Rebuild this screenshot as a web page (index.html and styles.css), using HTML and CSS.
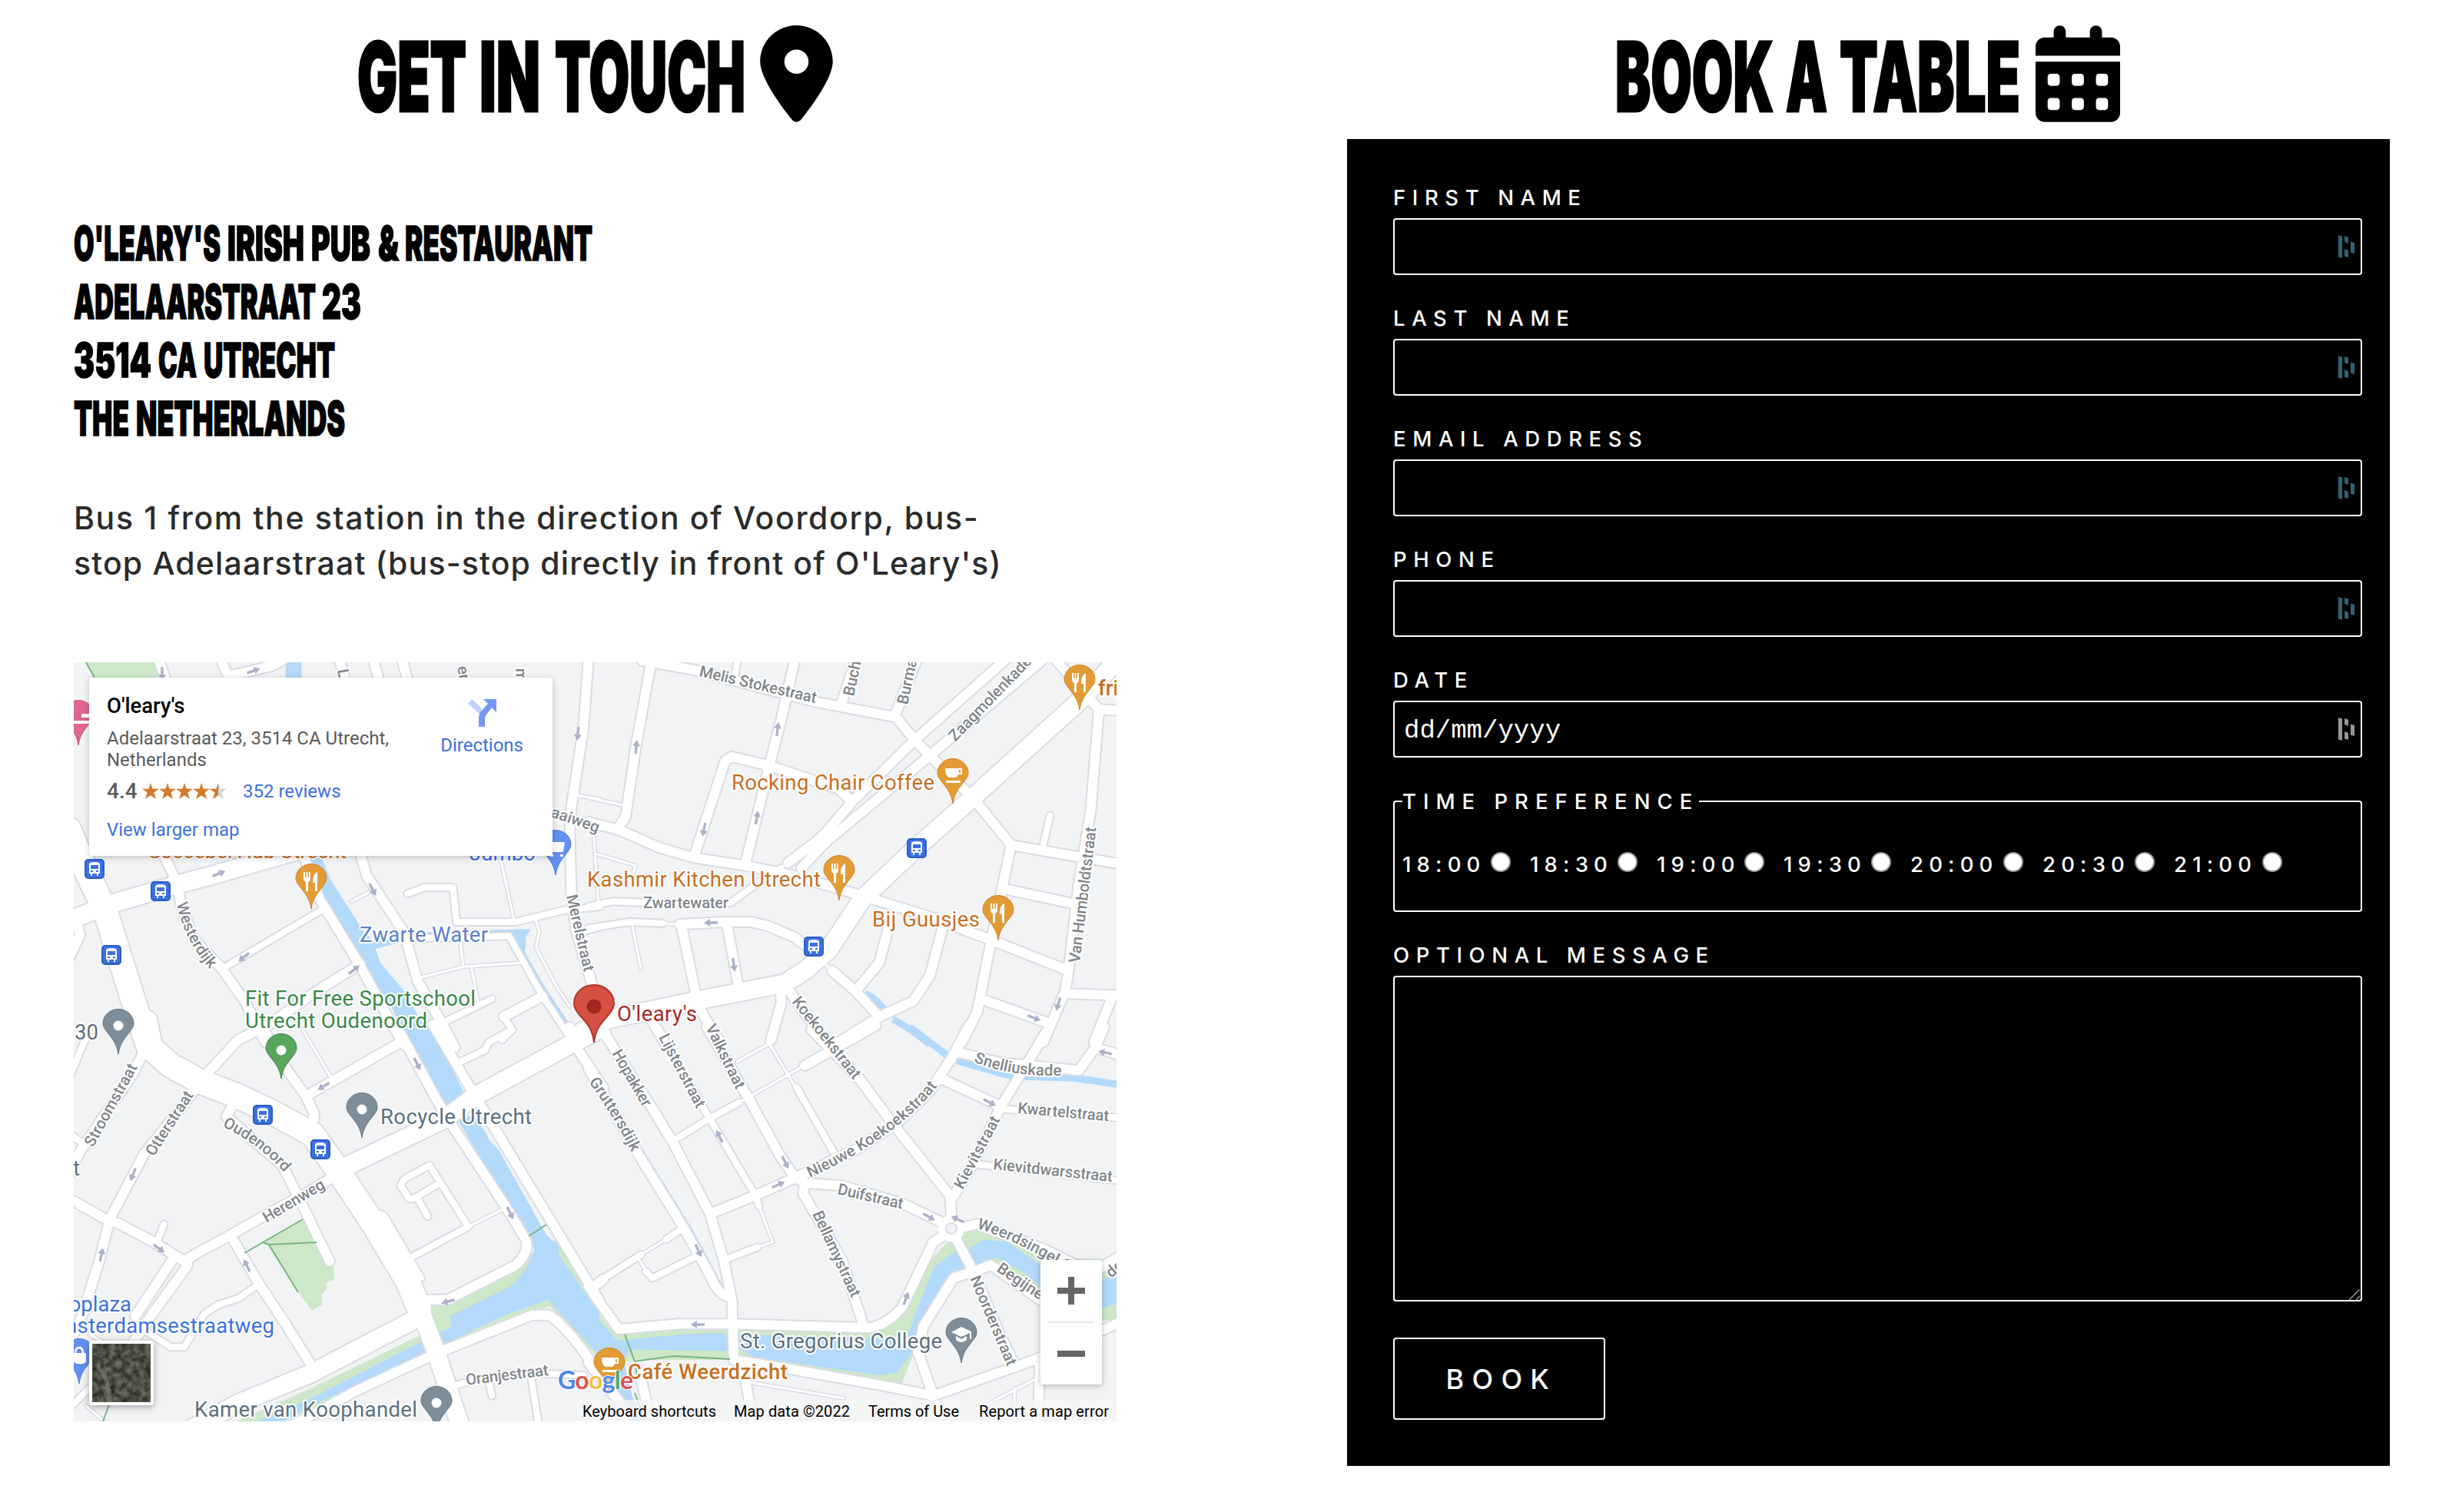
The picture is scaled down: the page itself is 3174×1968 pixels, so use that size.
FILE: index.html
```html
<!DOCTYPE html>
<html lang="en">
<head>
<meta charset="utf-8">
<title>O'Leary's - Contact</title>
<link rel="stylesheet" href="styles.css">
</head>
<body>
<svg width="0" height="0" class="sprite" aria-hidden="true">
  <defs>
    <symbol id="dash" viewBox="0 0 21 30"><path d="M0 0l5 1.5V30L0 28.500zM8 1l5 1.500V11L8 9zM8 18l5 2v9l-5-1.500zM16 8.500l5 1.500v14l-5-1.500z"/></symbol>
    <path id="star" d="M11 0l2.600 7.700H22l-6.600 4.900 2.500 8.400L11 16.200 4.100 21l2.500-8.400L0 7.700h8.400z"/>
  </defs>
</svg>
<main class="page">
  <section class="column">
    <h1 class="title">
      <svg class="title-text" width="502" height="181">
        <text x="-1" y="145" textLength="142" lengthAdjust="spacingAndGlyphs">GET</text>
        <text x="158" y="145" textLength="79" lengthAdjust="spacingAndGlyphs">IN</text>
        <text x="256" y="145" textLength="248" lengthAdjust="spacingAndGlyphs">TOUCH</text>
      </svg>
      <svg class="title-icon" width="95" height="126" viewBox="0 0 384 512"><path d="M215.7 499.2C267 435 384 279.4 384 192C384 86 298 0 192 0S0 86 0 192c0 87.4 117 243 168.3 307.2c12.3 15.3 35.1 15.3 47.4 0zM192 256c-35.3 0-64-28.700-64-64s28.700-64 64-64s64 28.700 64 64s-28.700 64-64 64z"/></svg>
    </h1>
    <svg class="address" width="700" height="310">
      <text x="0" y="62" textLength="191" lengthAdjust="spacingAndGlyphs">O'LEARY'S</text><text x="200" y="62" textLength="100" lengthAdjust="spacingAndGlyphs">IRISH</text><text x="309" y="62" textLength="77" lengthAdjust="spacingAndGlyphs">PUB</text><text x="396" y="62" textLength="27" lengthAdjust="spacingAndGlyphs">&amp;</text><text x="431" y="62" textLength="244" lengthAdjust="spacingAndGlyphs">RESTAURANT</text>
      <text x="0" y="138" textLength="315" lengthAdjust="spacingAndGlyphs">ADELAARSTRAAT</text><text x="323" y="138" textLength="51" lengthAdjust="spacingAndGlyphs">23</text>
      <text x="0" y="214" textLength="101" lengthAdjust="spacingAndGlyphs">3514</text><text x="110" y="214" textLength="50" lengthAdjust="spacingAndGlyphs">CA</text><text x="169" y="214" textLength="171" lengthAdjust="spacingAndGlyphs">UTRECHT</text>
      <text x="0" y="290" textLength="72" lengthAdjust="spacingAndGlyphs">THE</text><text x="81" y="290" textLength="272" lengthAdjust="spacingAndGlyphs">NETHERLANDS</text>
    </svg>
    <p class="route"><span class="route-a">Bus 1 from the station in the direction of Voordorp, bus-</span><br><span class="route-b">stop Adelaarstraat (bus-stop directly in front of O'Leary's)</span></p>

    <div class="map">
      <svg class="map-canvas" width="1357" height="988" viewBox="96 862 1357 988">
        <defs>
          <g id="wide">
            <g transform="translate(90 850) scale(.44014 .33333)"><path d="M0 690L50 850 105 1000 200 1400 235 1540"/></g>
            <g transform="translate(90 1340) scale(.44014 .33333)"><path d="M225-30L240 70 300 140 390 205 500 260 610 330 720 410 790 540 900 760 1000 980 1035 1090"/></g>
          </g>
          <g id="major">
            <g transform="translate(90 850) scale(.44014 .33333)"><path d="M0 1045L110 985 330 900 430 865 600 800 680 770"/></g>
            <g transform="translate(770 850) scale(.44014 .33333)"><path d="M1560 20L1440 190 1130 560 960 760 800 960 700 1160 630 1240 570 1290 300 1360 50 1430-30 1480"/></g>
            <g transform="translate(90 1340) scale(.44014 .33333)"><path d="M1568 0L1480 60 1200 260 1110 350 810 540M1040 1120L850 1250 720 1340 500 1460 360 1560M1040 1100L1085 1260 1160 1560"/></g>
          </g>
          <g id="street">
            <g transform="translate(90 850) scale(.44014 .33333)"><path d="M0 1190L32 1100 20 1040M265 30L285 100M450 30L470 90 600 50 630 30M900 30L915 100M985 30L1000 100M800 30L815 100M1535 30L1520 300 1485 600 1480 700 1485 950 1500 1090 1545 1290 1568 1400M280 790L320 900 330 980 370 1120 450 1230 520 1360 580 1520M690 780L740 960 860 1220 950 1440 990 1530M860 780L880 870 990 1090 1030 1280 1100 1440 1140 1540M570 1470L720 1330 860 1215M1400 1340L1285 1420"/></g>
            <g transform="translate(770 850) scale(.44014 .33333)"><path d="M150 30L300 65 660 190 900 250 955 340 1000 400 1130 570 1240 750 1568 825M175 40L130 370 100 640 75 690M600 30L560 260 525 440 455 820M525 440L415 405 395 420 305 785M525 440L730 530 770 580M-10 660L80 690 200 760 305 800 455 830 600 870 780 940 1000 1030 1180 1120 1410 1240 1400 1320 1335 1520M1220 30L955 340 770 580 680 720 580 820M1330 30L1000 400 690 740 620 840M680 715L692 742M780 30L740 190M960 30L895 250M1375 30L1440 130 1500 220 1568 225M1500 220L1475 620 1440 900 1410 1240M1240 750L1180 1130 1140 1400 1095 1520M1215 920L1430 980M1150 1350L1340 1440M1400 1330L1568 1337M1540 1340L1485 1520M260 1060L390 1050 470 1050 520 1065 600 1110 650 1160M265 1060L312 1360M400 1060L435 1310M880 1060L850 1210 780 1320M1040 1060L1000 1260 950 1360 850 1420 730 1520M710 1240L780 1320 850 1420M560 1300L560 1370 530 1510M570 1290L600 1350 700 1530M310 1370L380 1520M180 1440L215 1520M20 1440L60 1530"/></g>
            <g transform="translate(90 1340) scale(.44014 .33333)"><path d="M230 60L190 170 30 480 0 570M575-10L500 40 395 190 340 290 220 490 120 740 90 900 40 1110 10 1200M0 660L100 735 150 760 250 830 340 905 370 880 480 800 560 740 700 640 800 560M350 920L230 1140 180 1240M305 900L195 1120M480 810L560 990 640 1150 725 1330M490 280L465 340 560 450 630 530 680 660 770 905M575 0L640 150 700 260 725 330 720 370M700 260L980 50M965-20L1110 330 1290 690 1350 820Q1362 870 1320 920L1120 1055 1050 1055M1075-20L1200 260 1568 1060M1480-10L1500 70 1580 230M1600 1400L1500 1220Q1430 1110 1410 1115L1370 1115 1085 1265 850 1410 640 1560M1545 1010L1580 975"/></g>
            <g transform="translate(770 1340) scale(.44014 .33333)"><path d="M30 0L180 310 240 440 350 720 390 900 415 1060 420 1290M420 1290L560 1320 860 1390 1010 1430 1310 1290 1568 1140M-10 150L130 470 270 770 350 960Q375 1040 410 1045M340-10L460 260 560 500 600 575M630 140L840-15M650 0L790 190 880 350 1060 650 1065 760M350 720L480 650 600 580 780 470 900 370 1000 240 1065 110 1115-15M600 580L640 600 740 610 920 680 1030 750M630 600L625 640 740 900 780 1060 805 1160M-10 1000L20 1060 80 1170 260 1150 420 1150 820 1165Q880 1150 920 1080L1010 830 1060 790M1085 90L1210 130 1440 160 1490 70 1560 100M1490 70L1515-10M1355-15L1210 300 1130 520 1065 660M1030 190L1210 300M1070 780L1140 760 1340 860 1480 950 1568 880M1075 810L1130 950 1200 1170 1250 1310M1010 1430L965 1260 980 1160 1070 970 1130 945 1180 920 1330 1060M1325 1290L1320 1560M-10 1300L80 1450 100 1560M140 1330L170 1500M455 1370L480 1560"/></g>
          </g>
          <g id="small">
            <g transform="translate(90 850) scale(.44014 .33333)"><path d="M1000 940L1050 915 1135 915 1145 1050 1320 1050 1460 1005 1568 990M1000 1115L1300 1105 1400 1340 1490 1520M1095 1450L1250 1350M1510 1090L1568 1070M450 1235L750 1000M1285 1420L1310 1470 1280 1510"/></g>
            <g transform="translate(770 850) scale(.44014 .33333)"><path d="M430 30L425 80M1355 635L1335 750M-10 990L60 970 160 975 410 975 500 890 560 840M-10 1075L110 1050 210 1055"/></g>
            <g transform="translate(90 1340) scale(.44014 .33333)"><path d="M50 30L0 190M0 405L45 450M280 760L260 830M230 1180L300 1240 340 1240 400 1110 440 1075 500 1050 555 1000M1150 130L1230 80 1240 50 1310 0M1095 600L1025 655Q1005 670 1000 650L980 610 990 585 1065 530 1180 770 1010 890M1030 660L1060 730M905 715L930 725 1040 970M1140 1390L1220 1360 1340 1340 1520 1350M1240 1370L1250 1430M1365 1350L1390 1560M0 1480L60 1400"/></g>
            <g transform="translate(770 1340) scale(.44014 .33333)"><path d="M200 0L345 340 485 650 495 690M490 850L390 900M240 435L345 350 435 285M525 50L540 0M605 225L720 490M-10 1010L145 880M220 820L265 780M160 945L180 970 310 885M1210 310L1560 345M1130 525L1560 590"/></g>
          </g>
          <g id="lane">
            <g transform="translate(90 850) scale(.44014 .33333)"><path d="M835 970L885 935M1275 800L1315 1040M1155 1110L1165 1225M1190 1230L1210 1370M1030 1270L1165 1225 1335 1210M1380 1045L1390 1090 1380 1150 1440 1300 1480 1380M1495 555L1568 570"/></g>
            <g transform="translate(770 850) scale(.44014 .33333)"><path d="M545 850L580 820M210 1055L260 1060M680 1200L710 1240M120 1065L145 1230M-10 565L95 595M5 700L20 970M15 785L130 830 120 870"/></g>
            <g transform="translate(90 1340) scale(.44014 .33333)"><path d="M690 0L775 190M1180 770L1285 700M50 1470L130 1560M60 1190L100 1220"/></g>
            <g transform="translate(770 1340) scale(.44014 .33333)"><path d="M495 690L535 830 490 850M435 285L630 140M430 125L525 55 600 220M145 880L225 815M135 890L160 940M455 1375L745 1440M1100 1510L1320 1360M1250 1400V1560"/></g>
          </g>
          <path id="drop" d="M0 0C-2-14-8-20-14-28C-18-33-20-36-20-40A20 18.500 0 0 1 20-40C20-36 18-33 14-28C8-20 2-14 0 0z"/>
          <g id="food"><use href="#drop"/><path class="glyph" d="M-10-48h2v7h1.500v-7h2v7H-3v-7h2v8q0 4-3 5v12h-3v-12q-3-1-3-5zM8-48v25H5v-11H2q0-12 6-14z"/></g>
          <g id="coffee"><use href="#drop"/><path class="glyph" d="M-10-46h22v8h-5q-1 4-4 4h-8q-5-2-5-12zM8-44v4h2v-4zM-9-30H10v3H-9z"/></g>
          <g id="spot"><use href="#drop"/><circle class="glyph" cy="-37" r="6.500"/></g>
          <g id="bus"><rect x="-12" y="-12" width="24" height="24" rx="4" fill="#3b71e0" stroke="#2c5cc0" stroke-width="2"/><path fill="#fff" fill-rule="evenodd" d="M-7-6q0-3 7-3t7 3V6H5v3H3V6h-6v3h-2V6h-2zM-5-5v5H5v-5zM-5 2v2h3V2zM2 2v2h3V2z"/></g>
          <path id="arrow" d="M0-9L5-1H1.700V9H-1.700V-1H-5z"/>
          <path id="p-west" d="M230 1176Q239 1222 272 1260"/>
          <path id="p-gru" d="M766 1408Q800 1455 822 1500"/>
          <path id="p-oud" d="M289 1466Q335 1488 366 1522"/>
          <path id="p-nwe" d="M1054 1533Q1165 1482 1218 1416"/>
          <path id="p-snel" d="M1267 1382Q1315 1402 1382 1400"/>
          <path id="p-weer" d="M1271 1599Q1320 1612 1400 1662"/>
          <filter id="grain" x="0" y="0" width="1" height="1" color-interpolation-filters="sRGB"><feTurbulence type="fractalNoise" baseFrequency=".13" numOctaves="4" seed="4"/><feColorMatrix values=".45 0 0 0 .07  .45 0 0 0 .08  .42 0 0 0 .055  0 0 0 0 1"/></filter>
        </defs>
        <rect x="96" y="862" width="1357" height="988" fill="#f1f3f5"/>
        <g class="green">
          <path transform="translate(90 850) scale(.44014 .33333)" d="M50 30H262V100H75Z"/>
          <path transform="translate(90 1340) scale(.44014 .33333)" d="M690 740L735 840 780 920 785 975 760 990 762 1010 745 1035 748 1075 718 1098 680 1030 585 840 570 830ZM1065 1085L1365 880 1440 820 1568 1070V1290L1420 1080 1085 1265 700 1490 600 1550 460 1550 700 1410 1060 1180Z"/>
          <path transform="translate(770 1340) scale(.44014 .33333)" d="M-10 1060L70 1190 270 1170 420 1175 830 1170 910 1130 1000 900 1060 820 1110 790 1150 780 1250 800 1340 890 1568 900V1130L1400 1150 1290 1000 1190 920 1060 990 970 1200 950 1270 915 1390 850 1380 470 1290 130 1290 90 1300Z"/>
        </g>
        <g class="water">
          <path transform="translate(90 850) scale(.44014 .33333)" d="M640 30H687V100H640ZM695 780H740L775 890 870 1085 900 1125 1000 1115 1010 1092 1365 1077 1350 1110 1348 1170 1400 1290 1490 1470H1475L1380 1290 1320 1120 1300 1098 1010 1120 905 1155 920 1210 985 1310 1070 1500 1080 1540H1000L960 1400 830 1130 740 930Z"/>
          <path transform="translate(90 1340) scale(.44014 .33333)" d="M980-10H1070L1175 265 1120 305ZM1150 355L1195 330 1235 410 1240 430 1270 470 1410 800 1450 850 1445 875 1568 1110V1275L1415 1055 1300 1110 1085 1240 700 1480 600 1560 520 1550 700 1450 1070 1200 1130 1160 1125 1120 1310 1000 1350 940 1375 860 1355 800 1290 670Z"/>
          <path transform="translate(770 1340) scale(.44014 .33333)" d="M-10 1090L75 1215 270 1190 385 1185 405 1200 400 1255 110 1250 95 1300 120 1430 160 1550H100L60 1330-10 1210ZM430 1190L930 1210 960 1100 1010 930 1070 870 1110 860 1160 820 1230 830 1330 920 1400 1000 1568 960V1060L1510 1090 1400 1100 1290 960 1200 890 1130 920 1060 960 1010 1070 960 1200 950 1260 900 1340 850 1350 480 1280 430 1240Z"/>
        </g>
        <g class="stream">
          <path transform="translate(770 850) scale(.44014 .33333)" d="M808 1330Q835 1340 870 1400M890 1430Q950 1470 1000 1530"/>
          <path transform="translate(770 1340) scale(.44014 .33333)" d="M940-10Q1010 60 1060 110M1080 122L1240 182 1430 190 1560 215"/>
          <path class="brook" transform="translate(770 1340) scale(.44014 .33333)" d="M-30 70L-5 130 130 440 290 780 380 1000"/>
        </g>
        <use href="#lane" class="lane-edge"/><use href="#small" class="small-edge"/><use href="#street" class="street-edge"/><use href="#major" class="major-edge"/><use href="#wide" class="wide-edge"/>
        <use href="#lane" class="lane-fill"/><use href="#small" class="small-fill"/><use href="#street" class="street-fill"/><use href="#major" class="major-fill"/><use href="#wide" class="wide-fill"/>
        <circle cx="1238" cy="1599" r="12" fill="#f1f3f5" stroke="#fff" stroke-width="10"/><circle cx="1238" cy="1599" r="7" fill="none" stroke="#dadce3" stroke-width="2"/>
        <path class="trail" d="M112 862L123 882M318 1631L394 1587M341 1617L350 1620 412 1617M350 1620L388 1682M688 1609L711 1594M142 1828L134 1850M813 1737L826 1772 876 1765 950 1769M826 1772L829 1790M826 1813L840 1850"/>
        <g class="arrows">
          <use href="#arrow" transform="translate(211 877) rotate(180)"/><use href="#arrow" transform="translate(330 873) rotate(70)"/><use href="#arrow" transform="translate(752 955) rotate(185)"/><use href="#arrow" transform="translate(285 1137) rotate(68)"/><use href="#arrow" transform="translate(485 1158) rotate(152)"/><use href="#arrow" transform="translate(317 1246) rotate(232)"/><use href="#arrow" transform="translate(461 1262) rotate(52)"/>
          <use href="#arrow" transform="translate(828 972) rotate(5)"/><use href="#arrow" transform="translate(1012 949) rotate(8)"/><use href="#arrow" transform="translate(916 1080) rotate(192)"/><use href="#arrow" transform="translate(985 1064) rotate(10)"/><use href="#arrow" transform="translate(925 1201) rotate(268)"/><use href="#arrow" transform="translate(955 1256) rotate(172)"/><use href="#arrow" transform="translate(1377 1307) rotate(197)"/><use href="#arrow" transform="translate(1346 1325) rotate(112)"/>
          <use href="#arrow" transform="translate(543 1385) rotate(153)"/><use href="#arrow" transform="translate(421 1414) rotate(238)"/><use href="#arrow" transform="translate(173 1529) rotate(202)"/><use href="#arrow" transform="translate(132 1633) rotate(12)"/><use href="#arrow" transform="translate(207 1625) rotate(125)"/><use href="#arrow" transform="translate(321 1647) rotate(333)"/><use href="#arrow" transform="translate(664 1579) rotate(153)"/><use href="#arrow" transform="translate(583 1694) rotate(255)"/>
          <use href="#arrow" transform="translate(936 1479) rotate(333)"/><use href="#arrow" transform="translate(1022 1513) rotate(153)"/><use href="#arrow" transform="translate(1013 1542) rotate(65)"/><use href="#arrow" transform="translate(909 1628) rotate(155)"/><use href="#arrow" transform="translate(908 1724) rotate(270)"/><use href="#arrow" transform="translate(1179 1690) rotate(20)"/><use href="#arrow" transform="translate(1209 1584) rotate(120)"/><use href="#arrow" transform="translate(1246 1587) rotate(295)"/><use href="#arrow" transform="translate(1288 1435) rotate(118)"/><use href="#arrow" transform="translate(1438 1370) rotate(282)"/>
        </g>
        <g class="road-names">
          <text><textPath href="#p-west">Westerdijk</textPath></text>
          <text transform="translate(705 1059) rotate(19)">naaiweg</text>
          <text transform="translate(737 1166) rotate(77)" textLength="102">Merelstraat</text>
          <text transform="translate(439 872) rotate(80)">L</text><text transform="translate(595 868) rotate(80)">en</text><text transform="translate(671 870) rotate(88)">m</text>
          <text transform="translate(909 880) rotate(13)" textLength="156">Melis Stokestraat</text>
          <text transform="translate(1111 907) rotate(-78)">Bucho</text>
          <text transform="translate(1181 918) rotate(-78)">Burman</text>
          <text transform="translate(1243 966) rotate(-46)" textLength="145">Zaagmolenkade</text>
          <text transform="translate(1405 1254) rotate(-83)" textLength="178">Van Humboldtstraat</text>
          <text x="837" y="1182" textLength="111">Zwartewater</text>
          <text transform="translate(1030 1304) rotate(51.500)" textLength="130">Koekoekstraat</text>
          <text transform="translate(918 1337) rotate(64)" textLength="91">Valkstraat</text>
          <text transform="translate(857 1350) rotate(62)" textLength="106">Lijsterstraat</text>
          <text transform="translate(796 1371) rotate(60)" textLength="82">Hopakker</text>
          <text><textPath href="#p-gru">Gruttersdijk</textPath></text>
          <text transform="translate(1057 1580) rotate(65)" textLength="121">Bellamystraat</text>
          <text><textPath href="#p-nwe">Nieuwe Koekoekstraat</textPath></text>
          <text transform="translate(1089 1554) rotate(13)" textLength="87">Duifstraat</text>
          <text transform="translate(1253 1549) rotate(-62)" textLength="104">Kievitstraat</text>
          <text><textPath href="#p-snel">Snelliuskade</textPath></text>
          <text transform="translate(1324 1449) rotate(5)" textLength="119">Kwartelstraat</text>
          <text transform="translate(1292 1522) rotate(6)" textLength="156">Kievitdwarsstraat</text>
          <text><textPath href="#p-weer">Weerdsingel O.Z.</textPath></text>
          <text transform="translate(1296 1654) rotate(34)">Begijne</text>
          <text transform="translate(1446 1664) rotate(-40)">de</text>
          <text transform="translate(1262 1664) rotate(67)" textLength="125">Noorderstraat</text>
          <text transform="translate(121 1494) rotate(-61)" textLength="120">Stroomstraat</text>
          <text transform="translate(200 1506) rotate(-57)" textLength="96">Otterstraat</text>
          <text><textPath href="#p-oud">Oudenoord</textPath></text>
          <text transform="translate(347 1592) rotate(-31)" textLength="90">Herenweg</text>
          <text transform="translate(607 1803) rotate(-7)" textLength="108">Oranjestraat</text>
        </g>
        <g class="places">
          <text class="c-water" x="468" y="1226" textLength="167">Zwarte Water</text>
          <text class="c-green" x="319" y="1309" textLength="300">Fit For Free Sportschool</text>
          <text class="c-green" x="319" y="1338" textLength="237">Utrecht Oudenoord</text>
          <text class="c-blue" x="611" y="1120" textLength="86">Jumbo</text>
          <text class="c-orange" x="193" y="1117" textLength="258">Soccebel Hub Utrecht</text>
          <text class="c-grey" x="97" y="1353">30</text>
          <text class="c-grey" x="95" y="1530">t</text>
          <text class="c-orange" x="952" y="1028" textLength="264">Rocking Chair Coffee</text>
          <text class="c-orange" x="764" y="1154" textLength="304">Kashmir Kitchen Utrecht</text>
          <text class="c-orange" x="1135" y="1206" textLength="140">Bij Guusjes</text>
          <text class="c-orange strong" x="1429" y="905">fri</text>
          <text class="c-red" x="803" y="1329" textLength="104">O'leary's</text>
          <text class="c-blue" x="171" y="1707" text-anchor="end">oplaza</text>
          <text class="c-blue" x="357" y="1735" text-anchor="end" textLength="272">nsterdamsestraatweg</text>
          <text class="c-grey" x="495" y="1463" textLength="197">Rocycle Utrecht</text>
          <text class="c-grey" x="253" y="1844" textLength="290">Kamer van Koophandel</text>
          <text class="c-grey" x="963" y="1755" textLength="263">St. Gregorius College</text>
          <text class="c-orange strong" x="817" y="1795" textLength="208">Café Weerdzicht</text>
        </g>
        <use href="#bus" x="123" y="1131"/><use href="#bus" x="209" y="1160"/><use href="#bus" x="145" y="1243"/><use href="#bus" x="1193" y="1104"/><use href="#bus" x="1059" y="1232"/><use href="#bus" x="342" y="1451"/><use href="#bus" x="417" y="1496"/>
        <g class="pin-orange"><use href="#food" x="405" y="1183"/><use href="#food" x="1405" y="924"/><use href="#coffee" x="1240" y="1046"/><use href="#food" x="1092" y="1172"/><use href="#food" x="1299" y="1224"/><use href="#coffee" x="793" y="1813"/></g>
        <g class="pin-grey"><use href="#spot" x="154" y="1372"/><use href="#spot" x="471" y="1481"/><use href="#spot" x="568" y="1863"/><use href="#drop" x="1251" y="1774"/></g>
        <path fill="#fff" d="M1251 1727l13 6v10h-2v-8l-11 5-13-6zM1244 1739l7 4 7-4v5q-7 6-14 0z"/>
        <g class="pin-green"><use href="#spot" x="366" y="1404"/></g>
        <g class="pin-blue"><use href="#drop" x="723" y="1139"/><use href="#drop" x="103" y="1801"/></g>
        <path fill="#fff" d="M716 1096h19l-2 13h-16zM716 1112h4v3h-4zM729 1112h4v3h-4zM96 1761h16v12q-8 5-16 0z"/><path fill="none" stroke="#fff" stroke-width="2.500" d="M98 1762q0-8 5-8t5 8"/>
        <g class="pin-pink"><use href="#drop" x="102" y="970"/></g><path fill="#fff" d="M96 938h20v4h-20zM106 929h10v5h-10z"/>
        <path d="M773 1357C771 1339 764 1332 755 1322C749 1315 747 1311 747 1306A26 24 0 0 1 799 1306C799 1311 797 1315 791 1322C782 1332 775 1339 773 1357z" fill="#d65142" stroke="#b3362b" stroke-width="2"/><circle cx="773" cy="1310" r="9.500" fill="#a12720"/>
        <text class="google" x="726" y="1808" textLength="98"><tspan fill="#4f86ec">G</tspan><tspan fill="#d9544a">o</tspan><tspan fill="#f0c043">o</tspan><tspan fill="#4f86ec">g</tspan><tspan fill="#58a55c">l</tspan><tspan fill="#d9544a">e</tspan></text>
        <rect x="748" y="1822" width="705" height="28" fill="#f5f5f5" fill-opacity=".8"/>
        <g class="credits"><text x="758" y="1844" textLength="174">Keyboard shortcuts</text><text x="955" y="1844" textLength="151">Map data ©2022</text><text x="1130" y="1844" textLength="118">Terms of Use</text><text x="1274" y="1844" textLength="169">Report a map error</text></g>
      </svg>
      <div class="place-card">
        <div class="place-info">
          <div class="place-name">O'leary's</div>
          <div class="place-address">Adelaarstraat 23, 3514 CA Utrecht,<br>Netherlands</div>
          <div class="rating"><b>4.4</b>
            <svg width="110" height="22" viewBox="0 0 110 22"><g fill="#d37b2c"><use href="#star"/><use href="#star" x="22"/><use href="#star" x="44"/><use href="#star" x="66"/></g><use href="#star" x="88" fill="#d3d3d3"/><path fill="#d37b2c" d="M99 0v16.200L92.100 21l2.500-8.400L88 7.700h8.400z"/></svg>
            <a>352 reviews</a></div>
          <a class="larger">View larger map</a>
        </div>
        <div class="directions">
          <svg width="37" height="36" viewBox="0 0 37 36"><path fill="#c0cffb" d="M0 6L5 0 18 12V22z"/><path fill="#7297f5" d="M14 36V23q0-4 3-7l9-10-6-6H37V17l-6-6-7 9q-2 2-2 5V36z"/></svg>
          <a>Directions</a>
        </div>
      </div>
      <svg class="thumb" width="76" height="76"><rect width="76" height="76" filter="url(#grain)"/><path d="M6 30Q22 44 24 76" fill="none" stroke="#a79d92" stroke-opacity=".35" stroke-width="5"/></svg>
      <div class="zoom"><i class="plus"></i><hr><i class="minus"></i></div>
    </div>
  </section>

  <section class="column">
    <h1 class="title">
      <svg class="title-text" width="524" height="181">
        <text x="-2" y="145" textLength="206" lengthAdjust="spacingAndGlyphs">BOOK</text>
        <text x="220" y="145" textLength="54" lengthAdjust="spacingAndGlyphs">A</text>
        <text x="290" y="145" textLength="235" lengthAdjust="spacingAndGlyphs">TABLE</text>
      </svg>
      <svg class="title-icon" width="110" height="126" viewBox="0 0 448 512"><path d="M128 0c17.700 0 32 14.300 32 32V64H288V32c0-17.700 14.300-32 32-32s32 14.300 32 32V64h48c26.500 0 48 21.500 48 48v48H0V112C0 85.500 21.500 64 48 64H96V32c0-17.700 14.300-32 32-32zM0 192H448V464c0 26.500-21.500 48-48 48H48c-26.500 0-48-21.500-48-48V192zm64 80v32c0 8.800 7.200 16 16 16h32c8.800 0 16-7.200 16-16V272c0-8.800-7.200-16-16-16H80c-8.800 0-16 7.200-16 16zm128 0v32c0 8.800 7.200 16 16 16h32c8.800 0 16-7.200 16-16V272c0-8.800-7.200-16-16-16H208c-8.800 0-16 7.200-16 16zm144-16c-8.800 0-16 7.200-16 16v32c0 8.800 7.200 16 16 16h32c8.800 0 16-7.200 16-16V272c0-8.800-7.200-16-16-16H336zM64 400v32c0 8.800 7.200 16 16 16h32c8.800 0 16-7.200 16-16V400c0-8.800-7.200-16-16-16H80c-8.800 0-16 7.200-16 16zm144-16c-8.800 0-16 7.200-16 16v32c0 8.800 7.200 16 16 16h32c8.800 0 16-7.200 16-16V400c0-8.800-7.200-16-16-16H208zm112 16v32c0 8.800 7.200 16 16 16h32c8.800 0 16-7.200 16-16V400c0-8.800-7.200-16-16-16H336c-8.800 0-16 7.200-16 16z"/></svg>
    </h1>
    <form class="booking">
      <label class="field"><span>FIRST NAME</span><input type="text"><svg class="badge"><use href="#dash"/></svg></label>
      <label class="field"><span>LAST NAME</span><input type="text"><svg class="badge"><use href="#dash"/></svg></label>
      <label class="field"><span>EMAIL ADDRESS</span><input type="text"><svg class="badge"><use href="#dash"/></svg></label>
      <label class="field"><span>PHONE</span><input type="text"><svg class="badge"><use href="#dash"/></svg></label>
      <label class="field"><span>DATE</span><input type="text" value="dd/mm/yyyy"><svg class="badge pale"><use href="#dash"/></svg></label>
      <fieldset>
        <legend>TIME PREFERENCE</legend>
        <div class="times">
          <label>18:00<input type="radio"></label><label>18:30<input type="radio"></label><label>19:00<input type="radio"></label><label>19:30<input type="radio"></label><label>20:00<input type="radio"></label><label>20:30<input type="radio"></label><label>21:00<input type="radio"></label>
        </div>
      </fieldset>
      <label class="field message"><span>OPTIONAL MESSAGE</span><textarea></textarea><svg class="grip" width="14" height="14"><path d="M0 14L14 0M9 14L14 9" stroke="#999" stroke-width="1.500"/></svg></label>
      <button type="button">BOOK</button>
    </form>
  </section>
</main>
</body>
</html>
```

FILE: styles.css
```css
* { box-sizing: border-box; }
body { margin: 0; background: #fff; font-family: Inter, "Open Sans", sans-serif; }
.sprite { position: absolute; }
.page { display: flex; gap: 300px; padding-left: 96px; height: 1968px; overflow: hidden; }
.column { width: 1357px; flex: none; }

.title { display: flex; justify-content: center; align-items: flex-start; gap: 21px; height: 181px; margin: 0; }
.title-icon { margin-top: 33px; flex: none; }
.title-text, .address { flex: none; display: block; overflow: visible; }
.title-text text, .address text { font-family: Inter, Roboto, sans-serif; font-weight: 900; stroke: #000; }
.title-text text { font-size: 124.500px; stroke-width: 3px; }
.address text { font-size: 62px; stroke-width: 1.500px; }
.address { margin-top: 96px; }
.route { margin: 58px 0 0; color: #2b2b2b; font-size: 41px; font-weight: 500; line-height: 59px; white-space: nowrap; }
.route-a { letter-spacing: 1.65px; }
.route-b { letter-spacing: 1.15px; }

.map { position: relative; width: 1357px; height: 988px; margin-top: 99px; overflow: hidden; font-family: Roboto, sans-serif; }
.map-canvas { display: block; }
.map-canvas path { vector-effect: non-scaling-stroke; }
.green { fill: #cee7c9; }
.water { fill: #b3d9fb; }
.stream { fill: none; stroke: #b3d9fb; stroke-width: 9; }
.brook { stroke-width: 6; }
.map-canvas use[class$="edge"], .map-canvas use[class$="fill"] { fill: none; stroke-linejoin: round; stroke-linecap: round; }
.map-canvas use[class$="edge"] { stroke: #dadce3; }
.map-canvas use[class$="fill"] { stroke: #fff; }
.map-canvas .lane-edge { stroke: #e6e7ea; stroke-width: 6; }
.lane-fill { stroke-width: 3; }
.small-edge { stroke-width: 12; }
.small-fill { stroke-width: 8; }
.street-edge { stroke-width: 16; }
.street-fill { stroke-width: 12; }
.major-edge { stroke-width: 27; }
.major-fill { stroke-width: 23; }
.wide-edge { stroke-width: 35; }
.wide-fill { stroke-width: 31; }
.trail { fill: none; stroke: #78b67f; stroke-width: 2; }
.arrows { fill: #adb1cb; }
.road-names text, .places text { paint-order: stroke; stroke: #fff; stroke-width: 4px; stroke-linejoin: round; }
.road-names { font-size: 20.500px; fill: #80858a; font-weight: 500; }
.places { font-size: 27.500px; }
.strong { font-weight: 500; }
.c-water { fill: #5b80c9; }
.c-green { fill: #3a8748; }
.c-blue { fill: #3b71e0; }
.c-orange { fill: #c76f24; }
.c-grey { fill: #5a7080; }
.c-red { fill: #a52a22; }
.glyph { fill: #fff; stroke: none; }
.pin-orange { fill: #e39b36; stroke: #cf8528; }
.pin-grey { fill: #7d8d9a; stroke: #647784; }
.pin-green { fill: #5aa55c; stroke: #3f8a48; }
.pin-blue { fill: #6190ee; stroke: #4a7be0; }
.pin-pink { fill: #de6690; stroke: #cf4d7b; }
.google { font-family: Lato, sans-serif; font-size: 32px; font-weight: 700; paint-order: stroke; stroke: #fff; stroke-width: 2px; }
.credits { font-size: 20px; fill: #000; }

.place-card { position: absolute; left: 20px; top: 20px; width: 603px; height: 232px; padding: 21px 38px 0 23px; display: flex; justify-content: space-between; background: #fff; border-radius: 4px; box-shadow: 0 2px 8px rgba(0,0,0,.22); font-size: 24px; color: #5b5b5b; line-height: 28px; white-space: nowrap; }
.place-card a { color: #3b71e0; }
.place-name { color: #000; font-size: 27.500px; font-weight: 500; line-height: 32px; margin-bottom: 12px; }
.rating { display: flex; align-items: center; margin-top: 13px; height: 28px; }
.rating b { font-size: 28px; font-weight: 500; width: 46px; }
.rating a { margin-left: 21px; }
.larger { display: block; margin-top: 22px; }
.directions { display: flex; flex-direction: column; align-items: center; padding-top: 7px; gap: 10px; }
.thumb { position: absolute; left: 20px; top: 883px; width: 84px; height: 84px; border: 4px solid #fff; border-radius: 4px; box-shadow: 0 2px 8px rgba(0,0,0,.35); }
.zoom { position: absolute; left: 1258px; top: 778px; width: 80px; height: 162px; background: #fff; border-radius: 4px; box-shadow: 0 2px 8px rgba(0,0,0,.25); display: flex; flex-direction: column; align-items: center; justify-content: space-between; }
.zoom hr { width: 60px; height: 2px; margin: 0; border: 0; background: #e6e6e6; }
.plus, .minus { width: 36px; height: 80px; background: linear-gradient(#666,#666) center/36px 8px no-repeat; }
.plus { background: linear-gradient(#666,#666) center/36px 8px no-repeat, linear-gradient(#666,#666) center/8px 36px no-repeat; }

.booking { height: 1727px; padding: 60px 36px 0 60px; background: #000; color: #fff; font-size: 27.500px; font-weight: 500; letter-spacing: 8.600px; }
.field { display: block; position: relative; height: 157px; }
.field > span { display: block; height: 43px; line-height: 33px; }
.field input, textarea { display: block; width: 1261px; height: 74px; margin: 0; padding: 4px 12px 0; border: 2px solid #fff; border-radius: 4px; background: #000; color: #fff; font: 34px "Liberation Mono", monospace; }
.badge { position: absolute; left: 1230px; top: 65px; width: 21px; height: 30px; fill: #2f6379; }
.badge.pale { fill: #999593; }
fieldset { height: 161px; margin: 0; padding: 0 0 0 10px; border: 2px solid #fff; border-radius: 4px; }
legend { padding: 0; line-height: 34px; height: 34px; letter-spacing: 9px; }
.times { display: grid; grid-template-columns: 166px 165px 165px 165px 172px 171px 166px; margin-top: 45px; letter-spacing: 7.200px; }
.times label { display: flex; justify-content: space-between; padding-right: 25px; line-height: 40px; }
.times input { appearance: none; width: 26px; height: 26px; margin: 4px 0 0; border: 2px solid #999; border-radius: 50%; background: #fff; }
.message { height: 554px; padding-top: 40px; }
.message textarea { height: 424px; resize: none; }
.grip { position: absolute; left: 1244px; top: 491px; }
button { display: block; width: 276px; height: 107px; padding: 0 0 0 6px; border: 2px solid #fff; border-radius: 4px; background: #000; color: #fff; font: 500 36px Inter, sans-serif; letter-spacing: 10.300px; }
```
